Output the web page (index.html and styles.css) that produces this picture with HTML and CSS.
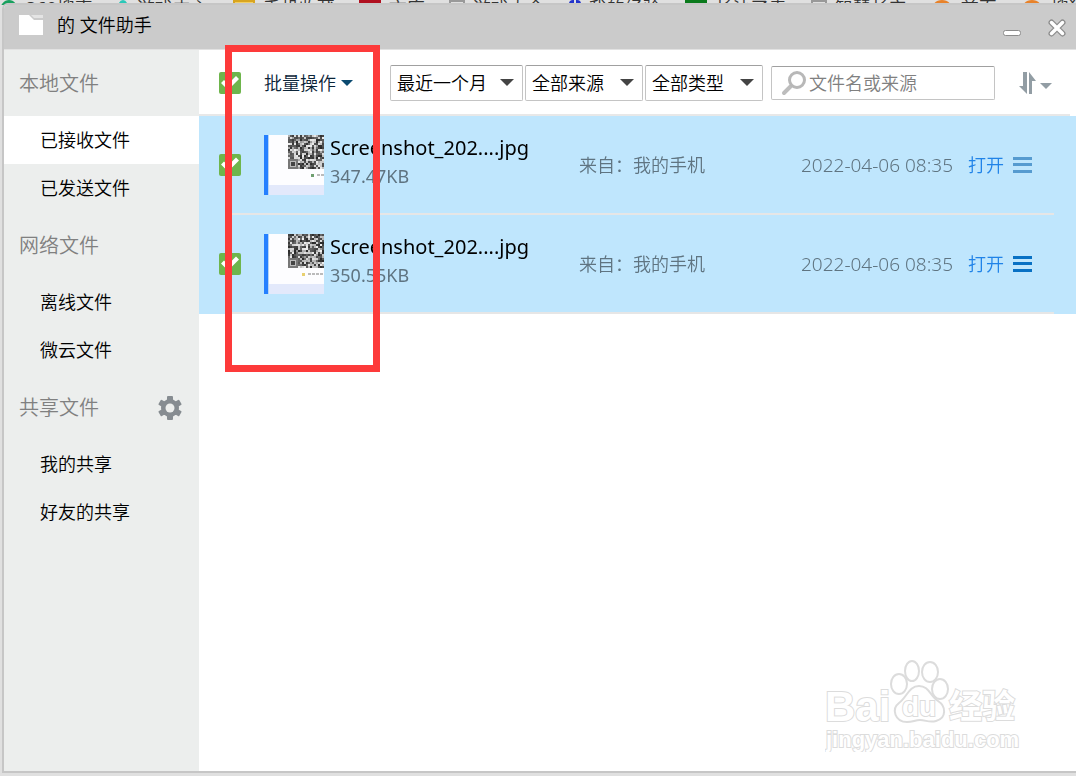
FILE: index.html
```html
<!DOCTYPE html>
<html lang="zh-CN">
<head>
    <meta charset="UTF-8">
    <meta name="viewport" content="width=device-width, initial-scale=1.0">
    <title>文件助手</title>
    <link rel="stylesheet" href="styles.css">
</head>
<body>
    <!-- Browser bookmarks behind the window -->
    <div class="bookmarks" aria-hidden="true">
        <span class="bookmark"><i class="mark ring green"></i>360搜索</span>
        <span class="bookmark"><i class="mark ring teal"></i>游戏中心</span>
        <span class="bookmark"><i class="mark folder"></i>手机收藏</span>
        <span class="bookmark"><i class="mark red"></i>文库</span>
        <span class="bookmark"><i class="mark page"></i>游戏大全</span>
        <span class="bookmark"><i class="mark paw"></i>我的经验</span>
        <span class="bookmark"><i class="mark square"></i>长沙了卖</span>
        <span class="bookmark"><i class="mark page"></i>智慧长安</span>
        <span class="bookmark"><i class="mark ring orange"></i>首页</span>
        <span class="bookmark"><i class="mark ring orange"></i>搜狗</span>
    </div>

    <div class="window">
        <header class="titlebar">
            <svg class="app-icon" width="24" height="20" viewBox="0 0 24 20">
                <path d="M0 0H10L15 5H24V20H0Z" fill="#fff"/>
                <path d="M12 0H24V3H15Z" fill="#e4e4e4"/>
            </svg>
            <h1>的 文件助手</h1>
            <button class="win-button minimize" aria-label="最小化">
                <svg width="20" height="20" viewBox="0 0 20 20">
                    <rect x="1.5" y="12.5" width="17" height="5" rx="2" fill="#fff" stroke="#8c8c8c"/>
                </svg>
            </button>
            <button class="win-button" aria-label="关闭">
                <svg width="20" height="20" viewBox="0 0 20 20">
                    <path d="M4.5 4.5L15.5 15.5M15.5 4.5L4.5 15.5" stroke="#8c8c8c" stroke-width="6" stroke-linecap="round"/>
                    <path d="M4.5 4.5L15.5 15.5M15.5 4.5L4.5 15.5" stroke="#fff" stroke-width="3.5" stroke-linecap="round"/>
                </svg>
            </button>
        </header>

        <div class="content">
            <nav class="sidebar">
                <h2>本地文件</h2>
                <a href="#received" class="active">已接收文件</a>
                <a href="#sent">已发送文件</a>
                <h2>网络文件</h2>
                <a href="#offline">离线文件</a>
                <a href="#weiyun">微云文件</a>
                <h2>共享文件
                    <button class="settings" aria-label="共享设置">
                        <svg width="26" height="26" viewBox="0 0 26 26">
                            <g fill="#868c91">
                                <circle cx="13" cy="13" r="9"/>
                                <rect x="10" y="1" width="6" height="24" rx="1"/>
                                <rect x="10" y="1" width="6" height="24" rx="1" transform="rotate(60 13 13)"/>
                                <rect x="10" y="1" width="6" height="24" rx="1" transform="rotate(120 13 13)"/>
                            </g>
                            <circle cx="13" cy="13" r="4.5" fill="#eceeed"/>
                        </svg>
                    </button>
                </h2>
                <a href="#mine">我的共享</a>
                <a href="#friends">好友的共享</a>
            </nav>

            <main class="files">
                <div class="toolbar">
                    <input type="checkbox" class="check" aria-label="全选" checked>
                    <button class="batch">批量操作<span class="caret"></span></button>
                    <div class="select wide">
                        <select aria-label="时间"><option>最近一个月</option></select>
                    </div>
                    <div class="select">
                        <select aria-label="来源"><option>全部来源</option></select>
                    </div>
                    <div class="select">
                        <select aria-label="类型"><option>全部类型</option></select>
                    </div>
                    <label class="search">
                        <svg width="26" height="26" viewBox="0 0 26 26" fill="none">
                            <path d="M10 16L3 23" stroke="#bdbdbd" stroke-width="4" stroke-linecap="round"/>
                            <circle cx="16" cy="10" r="7.5" stroke="#b8b8b8" stroke-width="3"/>
                        </svg>
                        <input type="text" placeholder="文件名或来源" aria-label="搜索文件">
                    </label>
                    <button class="sort" aria-label="排序">
                        <svg width="17" height="22" viewBox="0 0 17 22" fill="#929da4">
                            <path d="M4 0H8V22L0 14H4Z"/>
                            <path d="M10 22H13V9H17L10 0Z"/>
                        </svg>
                        <span class="caret"></span>
                    </button>
                </div>

                <ul class="file-list">
                    <li>
                        <div class="file">
                            <input type="checkbox" class="check" aria-label="选择第一个文件" checked>
                            <canvas class="thumb" width="60" height="60" data-seed="7"></canvas>
                            <div class="info">
                                <div class="name">Screenshot_202....jpg</div>
                                <div class="size">347.47KB</div>
                            </div>
                            <div class="source">来自：我的手机</div>
                            <time>2022-04-06 08:35</time>
                            <a href="#open">打开</a>
                            <button class="more" aria-label="更多"></button>
                        </div>
                    </li>
                    <li>
                        <div class="file">
                            <input type="checkbox" class="check" aria-label="选择第二个文件" checked>
                            <canvas class="thumb" width="60" height="60" data-seed="23"></canvas>
                            <div class="info">
                                <div class="name">Screenshot_202....jpg</div>
                                <div class="size">350.55KB</div>
                            </div>
                            <div class="source">来自：我的手机</div>
                            <time>2022-04-06 08:35</time>
                            <a href="#open">打开</a>
                            <button class="more strong" aria-label="更多"></button>
                        </div>
                    </li>
                </ul>
            </main>
        </div>
    </div>

    <div class="highlight"></div>

    <svg class="watermark" width="200" height="96" viewBox="0 0 200 96">
        <g fill="#fff" stroke="#dcdcdc" stroke-width="2">
            <ellipse cx="74" cy="28" rx="8" ry="10"/>
            <ellipse cx="87" cy="15" rx="7" ry="10"/>
            <ellipse cx="105" cy="16" rx="8" ry="10"/>
            <ellipse cx="115" cy="33" rx="8" ry="10"/>
            <path d="M94 30C84 30 82 41 74 47C66 53 70 66 82 66C88 66 90 64 95 64C101 64 104 67 111 65C122 62 121 50 113 45C105 40 104 30 94 30Z"/>
        </g>
        <g class="watermark-text">
            <text x="0" y="65" font-size="42">Bai</text>
            <text x="77" y="60" font-size="28">du</text>
            <text x="124" y="62" font-size="33">经验</text>
            <text x="1" y="91" font-size="22">jingyan.baidu.com</text>
        </g>
    </svg>

    <script src="script.js"></script>
</body>
</html>
```

FILE: styles.css
```css
* {
    box-sizing: border-box;
}

body {
    display: flex;
    flex-direction: column;
    min-height: 100vh;
    margin: 0;
    padding: 0 0 5px 4px;
    background-color: #e0e0e0;
    font-family: "Noto Sans", "Noto Sans CJK SC", sans-serif;
    font-size: 18px;
    font-weight: 350;
    line-height: 24px;
    color: #000;
    overflow: hidden;
}

h1,
h2 {
    margin: 0;
    font-weight: 350;
}

a {
    text-decoration: none;
}

button,
input,
select {
    margin: 0;
    padding: 0;
    border: none;
    background: none;
    font: inherit;
    color: inherit;
}

button {
    cursor: pointer;
}

/* Bookmarks */
.bookmarks {
    display: flex;
    gap: 24px;
    height: 5px;
    margin-left: -4px;
    overflow: hidden;
    line-height: 16px;
    white-space: nowrap;
    color: #333;
}

.bookmark {
    display: flex;
    flex-shrink: 0;
    gap: 8px;
}

.mark {
    width: 22px;
    height: 22px;
}

.ring {
    border: 3px solid;
    border-radius: 50%;
}

.green {
    width: 18px;
    border-color: #18a05e;
}

.teal {
    width: 12px;
    border-color: #2ac8b8;
}

.orange {
    border-color: #e8822a;
}

.folder {
    border: 2px solid #d8a520;
    background-color: #f3cf63;
}

.red {
    background-color: #b01020;
}

.page {
    width: 16px;
    border: 2px solid #999;
}

.paw {
    width: 12px;
    border: solid #2233cc;
    border-width: 0 5px;
    border-radius: 4px;
}

.square {
    border: 3px solid #0a7a1c;
    background-color: #fff;
}

/* Window */
.window {
    display: flex;
    flex: 1;
    flex-direction: column;
    background-color: #fff;
    box-shadow: 0 0 0 2px #c6c6c6;
    border-top-left-radius: 4px;
}

.titlebar {
    display: flex;
    align-items: center;
    height: 45px;
    padding: 0 9px 4px 15px;
    background-color: #cbcbcb;
    border-bottom: 1px solid #e2e2e2;
    border-top-left-radius: 4px;
}

.titlebar h1 {
    flex: 1;
    margin-left: 14px;
    font-size: 18px;
}

.win-button {
    display: flex;
    padding-top: 6px;
}

.minimize {
    margin-right: 25px;
}

.content {
    display: flex;
    flex: 1;
}

/* Sidebar */
.sidebar {
    width: 195px;
    background-color: #eceeed;
}

.sidebar h2 {
    display: flex;
    align-items: center;
    justify-content: space-between;
    height: 66px;
    padding: 2px 16px 0 15px;
    font-size: 20px;
    color: #808080;
}

.sidebar a {
    display: block;
    padding-left: 36px;
    line-height: 48px;
    color: #000;
}

.sidebar .active {
    background-color: #fff;
}

.settings {
    display: flex;
}

/* Toolbar */
.files {
    flex: 1;
    min-width: 0;
}

.toolbar {
    display: flex;
    align-items: center;
    height: 66px;
    margin-right: 6px;
    padding: 2px 18px 0 20px;
    border-bottom: 2px solid #e8e8e8;
}

.check {
    appearance: none;
    flex-shrink: 0;
    width: 22px;
    height: 22px;
    border-radius: 2px;
    background-color: #6eb54c;
}

.check:checked::before {
    content: "";
    display: block;
    height: 22px;
    background-color: #fff;
    clip-path: polygon(2px 11px, 5px 8px, 9px 12px, 17px 4px, 20px 7px, 9px 18px);
}

.batch {
    display: flex;
    align-items: center;
    gap: 5px;
    margin: 0 37px 0 23px;
    white-space: nowrap;
    color: #0b2438;
}

.caret {
    border: 6px solid transparent;
    border-top-color: #0b4a70;
    border-bottom: none;
}

.select {
    position: relative;
    flex-shrink: 0;
    width: 118px;
    margin-right: 2px;
}

.wide {
    width: 133px;
}

.select::after {
    content: "";
    position: absolute;
    top: 14px;
    right: 9px;
    border: 7px solid transparent;
    border-top-color: #444;
    border-bottom: none;
    pointer-events: none;
}

.select select {
    appearance: none;
    width: 100%;
    height: 36px;
    padding-left: 6px;
    border: 1px solid #c4c4c4;
    border-top-color: #a0a0a0;
    border-radius: 2px;
}

.search {
    display: flex;
    flex: 1;
    align-items: center;
    gap: 2px;
    min-width: 0;
    height: 34px;
    margin: 0 24px 0 6px;
    padding-left: 9px;
    border: 1px solid #c4c4c4;
    border-top-color: #a0a0a0;
    border-radius: 2px;
}

.search svg {
    flex-shrink: 0;
}

.search input {
    flex: 1;
    min-width: 0;
}

.search input::placeholder {
    color: #808080;
}

.sort {
    display: flex;
    flex-shrink: 0;
    align-items: center;
    gap: 4px;
}

.sort .caret {
    margin-top: 6px;
    border-top-color: #929da4;
}

/* File list */
.file-list {
    margin: 0;
    padding: 0;
    list-style: none;
    background-color: #bfe6fd;
}

.file-list li::after {
    content: "";
    display: block;
    height: 2px;
    margin: 0 22px 0 33px;
    background-color: #e6e6e6;
}

.file {
    display: grid;
    grid-template-columns: 22px 60px 249px 1fr auto auto auto;
    align-items: center;
    height: 97px;
    padding: 0 44px 0 20px;
    white-space: nowrap;
    color: #5f7481;
}

.thumb {
    margin-left: 23px;
}

.info {
    margin-left: 29px;
    padding-bottom: 10px;
    font-weight: 400;
}

.name {
    font-size: 20px;
    line-height: 32px;
    color: #000;
}

.source {
    margin-left: 29px;
}

.file time {
    font-size: 19px;
}

.file a {
    margin-left: 15px;
    color: #2083e8;
}

.more {
    width: 19px;
    height: 16px;
    margin-left: 9px;
    border: solid #569bd0;
    border-width: 3px 0;
    background: linear-gradient(#569bd0, #569bd0) center / 100% 3px no-repeat;
}

.strong {
    border-color: #0871c4;
    background-image: linear-gradient(#0871c4, #0871c4);
}

/* Marked area */
.highlight {
    position: absolute;
    top: 45px;
    left: 225px;
    width: 155px;
    height: 327px;
    border: 7px solid #fd3a3a;
    pointer-events: none;
}

.watermark {
    position: absolute;
    right: 51px;
    bottom: 24px;
}

.watermark-text {
    fill: #fff;
    stroke: #dcdcdc;
    stroke-width: 2px;
    paint-order: stroke;
    font-family: "Liberation Sans", "Noto Sans CJK SC", sans-serif;
    font-weight: 700;
}
```

FILE: script.js
```js
// Draws the file previews: a phone page with a code in the top right corner
document.querySelectorAll('.thumb').forEach(function(canvas) {
    const ctx = canvas.getContext('2d');
    let seed = Number(canvas.dataset.seed);

    function next() {
        seed = (seed * 16807) % 2147483647;
        return seed / 2147483647;
    }

    ctx.fillStyle = '#fdfdff';
    ctx.fillRect(0, 0, 60, 60);
    ctx.fillStyle = '#2580ff';
    ctx.fillRect(0, 0, 4, 60);
    ctx.fillStyle = '#b5d5f5';
    ctx.fillRect(4, 0, 1, 60);
    ctx.fillStyle = '#e3e9fb';
    ctx.fillRect(5, 50, 55, 10);

    next();
    for (let y = 0; y < 34; y += 2) {
        for (let x = 24; x < 60; x += 2) {
            const shade = next() < 0.55 ? 40 + next() * 70 : 150 + next() * 90;
            ctx.fillStyle = 'rgb(' + shade + ',' + shade + ',' + shade + ')';
            ctx.fillRect(x, y, 2, 2);
        }
    }

    // Corner marker of the code
    ctx.fillStyle = '#777';
    ctx.fillRect(24, 24, 10, 10);
    ctx.fillStyle = '#bbb';
    ctx.fillRect(26, 26, 6, 6);
    ctx.fillStyle = '#444';
    ctx.fillRect(27, 27, 4, 4);

    ctx.fillStyle = canvas.dataset.seed === '7' ? '#6f9f70' : '#e8d070';
    ctx.fillRect(canvas.dataset.seed === '7' ? 47 : 38, 39, 3, 3);
    ctx.fillStyle = '#bbb';
    for (let x = canvas.dataset.seed === '7' ? 53 : 44; x < 60; x += 4) {
        ctx.fillRect(x, 39, 3, 2);
    }
});
```
